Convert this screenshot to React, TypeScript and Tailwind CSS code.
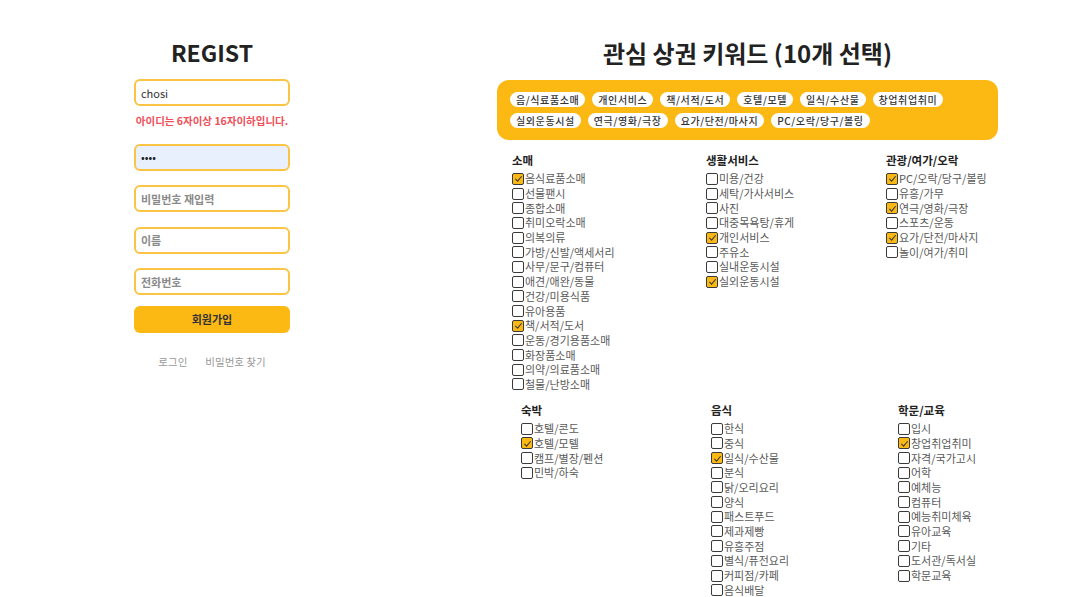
import React from "react";

const selected = [
	"음식료품소매",
	"개인서비스",
	"책/서적/도서",
	"호텔/모텔",
	"일식/수산물",
	"창업취업취미",
	"실외운동시설",
	"연극/영화/극장",
	"요가/단전/마사지",
	"PC/오락/당구/볼링",
];

const chips = [
	"음/식료품소매",
	"개인서비스",
	"책/서적/도서",
	"호텔/모텔",
	"일식/수산물",
	"창업취업취미",
	"실외운동시설",
	"연극/영화/극장",
	"요가/단전/마사지",
	"PC/오락/당구/볼링",
];

type Group = { title: string; items: string[] };

const topRow: Group[] = [
	{
		title: "소매",
		items: [
			"음식료품소매",
			"선물팬시",
			"종합소매",
			"취미오락소매",
			"의복의류",
			"가방/신발/액세서리",
			"사무/문구/컴퓨터",
			"애견/애완/동물",
			"건강/미용식품",
			"유아용품",
			"책/서적/도서",
			"운동/경기용품소매",
			"화장품소매",
			"의약/의료품소매",
			"철물/난방소매",
		],
	},
	{
		title: "생활서비스",
		items: [
			"미용/건강",
			"세탁/가사서비스",
			"사진",
			"대중목욕탕/휴게",
			"개인서비스",
			"주유소",
			"실내운동시설",
			"실외운동시설",
		],
	},
	{
		title: "관광/여가/오락",
		items: [
			"PC/오락/당구/볼링",
			"유흥/가무",
			"연극/영화/극장",
			"스포츠/운동",
			"요가/단전/마사지",
			"놀이/여가/취미",
		],
	},
];

const bottomRow: Group[] = [
	{
		title: "숙박",
		items: ["호텔/콘도", "호텔/모텔", "캠프/별장/펜션", "민박/하숙"],
	},
	{
		title: "음식",
		items: [
			"한식",
			"중식",
			"일식/수산물",
			"분식",
			"닭/오리요리",
			"양식",
			"패스트푸드",
			"제과제빵",
			"유흥주점",
			"별식/퓨전요리",
			"커피점/카페",
			"음식배달",
		],
	},
	{
		title: "학문/교육",
		items: [
			"입시",
			"창업취업취미",
			"자격/국가고시",
			"어학",
			"예체능",
			"컴퓨터",
			"예능취미체육",
			"유아교육",
			"기타",
			"도서관/독서실",
			"학문교육",
		],
	},
];

function Check({ label }: { label: string }) {
	const on = selected.includes(label);
	return (
		<div className="flex items-center h-[14.7px]">
			<span
				className={
					on
						? "flex items-center justify-center w-[12px] h-[12px] rounded-[2px] border-[1.5px] border-[#3a3a3a] bg-[#fdb913] shrink-0"
						: "flex items-center justify-center w-[12px] h-[12px] rounded-[2px] border-[1.5px] border-[#3a3a3a] bg-white shrink-0"
				}
			>
				{on && (
					<svg width="9" height="9" viewBox="0 0 10 10" fill="none">
						<path d="M1.5 5.5 L4 8 L8.5 2.5" stroke="#3a3a3a" strokeWidth="1.2" />
					</svg>
				)}
			</span>
			<span className="ml-[1px] text-[11px] leading-none text-[#5a5a5a] whitespace-nowrap">
				{label}
			</span>
		</div>
	);
}

function Column({ group }: { group: Group }) {
	return (
		<div>
			<div className="text-[11.5px] font-bold text-[#222] leading-none mb-[5px]">
				{group.title}
			</div>
			{group.items.map((it) => (
				<Check key={it} label={it} />
			))}
		</div>
	);
}

function Field({
	value,
	placeholder,
	type = "text",
	filled,
}: {
	value?: string;
	placeholder?: string;
	type?: string;
	filled?: boolean;
}) {
	return (
		<input
			type={type}
			defaultValue={value}
			placeholder={placeholder}
			className={
				filled
					? "w-[156px] h-[27px] px-[5px] rounded-[6px] border-2 border-[#fcc444] bg-[#e8f0fe] text-[11px] text-[#222] outline-none"
					: "w-[156px] h-[27px] px-[5px] rounded-[6px] border-2 border-[#fcc444] bg-white text-[11px] text-[#333] outline-none placeholder:text-[#8a8a8a] placeholder:font-bold"
			}
		/>
	);
}

export default function App() {
	return (
		<div
			className="flex w-[1089px] h-[597px] overflow-hidden bg-white"
			style={{ fontFamily: '"Noto Sans CJK KR", "Noto Sans", sans-serif' }}
		>
			<div className="ml-[134px] w-[156px] flex flex-col items-center pt-[41px]">
				<h1 className="text-[23px] font-bold leading-none text-[#222]">REGIST</h1>
				<div className="mt-[15px] flex flex-col">
					<Field value="chosi" />
					<p className="mt-[10px] text-[10.5px] font-bold text-[#f0505a] leading-none text-center whitespace-nowrap">
						아이디는 6자이상 16자이하입니다.
					</p>
					<div className="mt-[17px] flex flex-col gap-[14.5px]">
						<Field type="password" value="1234" filled />
						<Field type="password" placeholder="비밀번호 재입력" />
						<Field placeholder="이름" />
						<Field placeholder="전화번호" />
					</div>
					<button className="mt-[11px] w-[156px] h-[27px] rounded-[6px] bg-[#fdb913] text-[11px] font-bold text-[#333]">
						회원가입
					</button>
					<div className="mt-[21px] flex justify-center gap-[18px] text-[10.5px] text-[#999]">
						<span>로그인</span>
						<span>비밀번호 찾기</span>
					</div>
				</div>
			</div>

			<div className="ml-[207px] w-[501px] pt-[41px]">
				<h2 className="text-center text-[24px] font-bold leading-none text-[#222]">
					관심 상권 키워드 (10개 선택)
				</h2>
				<div className="mt-[15px] rounded-[12px] bg-[#fdb913] px-[13px] pt-[12px] pb-[12px] flex flex-wrap gap-x-[7px] gap-y-[6px]">
					{chips.map((c) => (
						<span
							key={c}
							className="h-[15px] px-[6px] rounded-full bg-white text-[10px] leading-[15px] text-[#333] font-medium tracking-[0.6px]"
						>
							{c}
						</span>
					))}
				</div>
				<div className="mt-[15px] grid grid-cols-[194px_180px_1fr] pl-[15px]">
					{topRow.map((g) => (
						<Column key={g.title} group={g} />
					))}
				</div>
				<div className="mt-[13px] grid grid-cols-[190px_187px_1fr] pl-[24px]">
					{bottomRow.map((g) => (
						<Column key={g.title} group={g} />
					))}
				</div>
			</div>
		</div>
	);
}
